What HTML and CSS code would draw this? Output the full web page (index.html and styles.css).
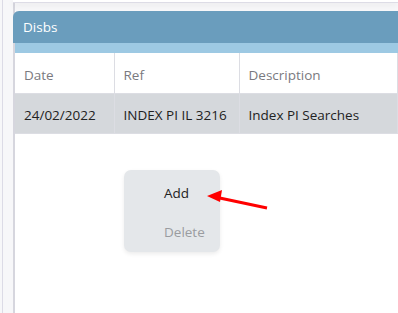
FILE: index.html
```html
<!DOCTYPE html>
<html lang="en">
<head>
  <meta charset="UTF-8">
  <title>Disbs</title>
  <link rel="stylesheet" href="styles.css">
</head>
<body>
  <div class="shell">
    <div class="side">
      <div class="top-card"></div>
      <div class="panel">
        <div class="panel-title">Disbs</div>
        <div class="panel-strip"></div>
        <table class="grid">
          <thead>
            <tr>
              <th class="col-date">Date</th>
              <th class="col-ref">Ref</th>
              <th>Description</th>
            </tr>
          </thead>
          <tbody>
            <tr class="selected">
              <td>24/02/2022</td>
              <td>INDEX PI IL 3216</td>
              <td>Index PI Searches</td>
            </tr>
          </tbody>
        </table>
      </div>
    </div>
  </div>

  <!-- menu contextuel -->
  <div class="context-menu">
    <div class="menu-item">Add</div>
    <div class="menu-item disabled">Delete</div>
  </div>

  <svg class="arrow" width="80" height="30" viewBox="0 0 80 30">
    <line x1="70" y1="23" x2="18" y2="12" stroke="#ff0000" stroke-width="3"/>
    <polygon points="10,11 25,5 23,17" fill="#ff0000"/>
  </svg>
</body>
</html>
```

FILE: styles.css
```css
body {
  margin: 0;
  font-family: "Open Sans", "Noto Sans", sans-serif;
  background-color: #f7f7f9;
  height: 313px;
  overflow: hidden;
  position: relative;
}

.shell {
  margin-left: 2px;
  border-left: 1px solid #dcdbe6;
  padding-left: 10px;
  height: 313px;
}

.side {
  border-left: 2px solid #d6d6de;
  height: 313px;
  background-color: #f7f7f9;
}

.top-card {
  height: 2px;
  margin-left: -2px;
  background-color: #ffffff;
  border-bottom: 1px solid #dddce6;
  box-shadow: 0 2px 6px rgba(0, 0, 0, 0.08);
  margin-bottom: 8px;
}

.panel {
  margin-left: -2px;
  background-color: #ffffff;
  height: 302px;
  border-left: 2px solid #d6d6de;
  border-top-left-radius: 6px;
}

.panel-title {
  height: 32px;
  line-height: 33px;
  margin-left: -2px;
  padding-left: 10px;
  background-color: #6a9dbd;
  border-top-left-radius: 6px;
  color: #ffffff;
  font-size: 13.5px;
}

.panel-strip {
  height: 10px;
  background-color: #9dc9e3;
}

.grid {
  border-collapse: collapse;
  font-size: 13.5px;
  width: 100%;
  table-layout: fixed;
}

.grid th,
.grid td {
  height: 40px;
  padding: 4px 0 0 9px;
  text-align: left;
  font-weight: normal;
  border-right: 1px solid #dcdde3;
  border-bottom: 1px solid #dcdde3;
  white-space: nowrap;
  overflow: hidden;
  box-sizing: border-box;
}

.grid th {
  color: #7a7a80;
}

.col-date {
  width: 99px;
}

.col-ref {
  width: 125px;
}

.grid tr.selected td {
  background-color: #d5d8dc;
  color: #222222;
}

.context-menu {
  position: absolute;
  left: 124px;
  top: 170px;
  width: 96px;
  padding-top: 4px;
  height: 78px;
  background-color: #e4e7ea;
  border-radius: 7px;
  box-shadow: 0 2px 4px rgba(0, 0, 0, 0.08);
  font-size: 13.5px;
}

.menu-item {
  height: 39px;
  line-height: 39px;
  padding-left: 40px;
  color: #222222;
}

.menu-item.disabled {
  color: #9a9ca0;
}

.arrow {
  position: absolute;
  left: 197px;
  top: 185px;
}
```
